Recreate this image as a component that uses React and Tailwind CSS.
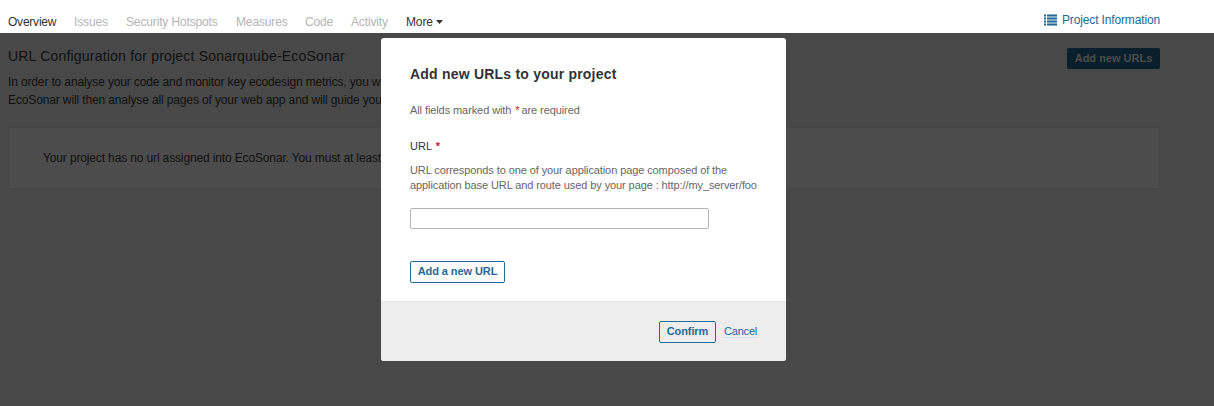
const tabs = [
  { label: "Issues", cls: "w-[52px]" },
  { label: "Security Hotspots", cls: "w-[110px]" },
  { label: "Measures", cls: "w-[69px]" },
  { label: "Code", cls: "w-[46px]" },
  { label: "Activity", cls: "w-[55px]" },
];

function ListIcon() {
  return (
    <svg width="13" height="12" viewBox="0 0 13 12" fill="#236a97" shapeRendering="crispEdges">
      <path opacity=".55" d="M0 0h2v12H0zM3 0h10v12H3z" />
      <path d="M0 1h2v1H0zM3 1h10v1H3zM0 4h2v1H0zM3 4h10v1H3zM0 7h2v1H0zM3 7h10v1H3zM0 10h2v1H0zM3 10h10v1H3z" />
    </svg>
  );
}

function NavBar() {
  return (
    <nav className="flex h-[33px] items-start bg-white pl-2 text-[12px] leading-[18px] whitespace-nowrap">
      <div className="flex flex-1 pt-[13px] tracking-[-0.14px] text-[#b4b4b4]">
        <a className="w-[66px] tracking-[-0.22px] text-[#333]">Overview</a>
        {tabs.map((t) => (
          <a key={t.label} className={t.cls}>{t.label}</a>
        ))}
        <a className="flex items-center gap-[3px] text-[#333]">
          More
          <svg width="7" height="4" viewBox="0 0 7 4" fill="#333"><path d="M0 0h7L3.5 4z" /></svg>
        </a>
      </div>
      <a className="mr-[54px] flex items-center gap-[5px] pt-[11px] tracking-[-0.14px] text-[#236a97]">
        <ListIcon />
        <span className="w-[98px]">Project Information</span>
      </a>
    </nav>
  );
}

function Page() {
  return (
    <main className="h-[373px] bg-[#484848] pl-2 pr-[54px] text-[12px] leading-[18px] whitespace-nowrap text-[#101010]">
      <header className="flex h-[93px] justify-between pt-[15px]">
        <div>
          <h1 className="h-[25px] text-[14px] leading-4 tracking-[0.2px]">URL Configuration for project Sonarquube-EcoSonar</h1>
          <p className="tracking-[-0.14px]">In order to analyse your code and monitor key ecodesign metrics, you w</p>
          <p className="tracking-[-0.13px]">EcoSonar will then analyse all pages of your web app and will guide you</p>
        </div>
        <button className="h-[21px] w-[93px] rounded-[2px] bg-[#0a1f2c] text-[11px] leading-[21px] font-bold text-[#4c4c4c]">Add new URLs</button>
      </header>
      <section className="mt-px h-[62px] border border-[#454545] bg-[#4c4c4c] pt-[21px] pl-[34px]">
        <p className="tracking-[-0.14px]">Your project has no url assigned into EcoSonar. You must at least</p>
      </section>
    </main>
  );
}

function Modal() {
  return (
    <div role="dialog" className="absolute top-[38px] left-[381px] flex h-[323px] w-[405px] flex-col overflow-hidden rounded-[3px] bg-white text-[11px] whitespace-nowrap text-[#666]">
      <div className="flex flex-1 flex-col items-start pt-[27px] pl-[29px]">
        <h2 className="text-[14px] leading-[18px] font-bold tracking-[0.21px] text-[#333]">Add new URLs to your project</h2>
        <p className="mt-5 leading-[15px] tracking-[-0.09px]">All fields marked with <em className="ml-px -mr-px text-[#c4131f] not-italic">*</em> are required</p>
        <label className="mt-[21px] leading-[15px] text-[#333]">URL <em className="ml-px font-bold text-[#c4232f] not-italic">*</em></label>
        <p className="mt-[9px] leading-[15px] tracking-[-0.095px]">URL corresponds to one of your application page composed of the</p>
        <p className="leading-[15px] tracking-[-0.095px]">application base URL and route used by your page : http://my_server/foo</p>
        <input className="mt-[15px] h-[21px] w-[299px] rounded-[2px] border border-[#b4b4b4] bg-white" />
        <button className="mt-8 h-[22px] w-[95px] rounded-[2px] border border-[#236a97] pb-px text-[11px] leading-[19px] font-bold tracking-[-0.08px] text-[#236a97]">Add a new URL</button>
      </div>
      <footer className="flex h-[60px] items-start justify-end border-t border-[#e6e6e6] bg-[#ededed] pt-[19px] pr-[29px] text-[#236a97]">
        <button className="mr-2 h-[22px] w-[57px] rounded-[2px] border border-[#236a97] pb-px leading-[19px] font-bold tracking-[-0.1px]">Confirm</button>
        <a className="mt-1 h-[13px] w-[33px] border-b border-[#cae3f2] leading-[13px] tracking-[-0.2px]">Cancel</a>
      </footer>
    </div>
  );
}

export default function App() {
  return (
    <div className="relative h-[406px] w-[1214px] overflow-hidden font-['Liberation_Sans',Arial,sans-serif]">
      <NavBar />
      <Page />
      <Modal />
    </div>
  );
}
